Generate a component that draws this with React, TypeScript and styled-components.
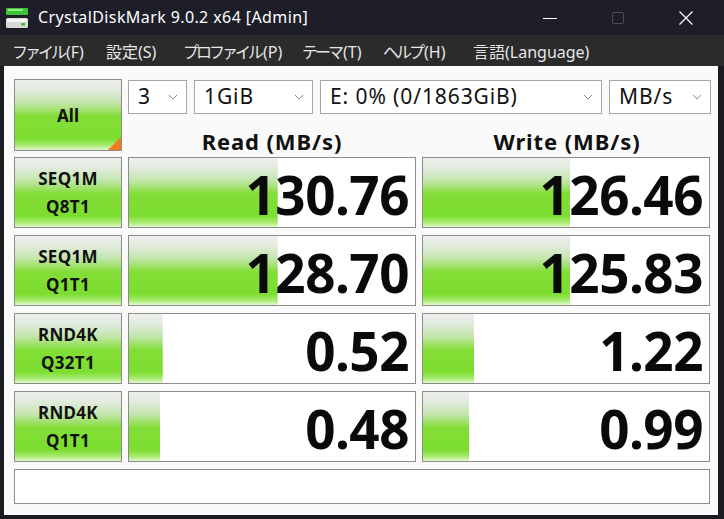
import React from "react";
import styled, { createGlobalStyle } from "styled-components";

const GlobalStyle = createGlobalStyle`
  html, body { margin: 0; padding: 0; background: #1b1b22; }
  body { font-family: "Noto Sans", "Noto Sans CJK JP", "Open Sans", sans-serif; }
`;

const Window = styled.div`
  width: 724px;
  height: 519px;
  display: flex;
  flex-direction: column;
  background: #1b1b22;
  overflow: hidden;
`;

const TitleBar = styled.div`
  height: 35px;
  background: #1e1e29;
  display: flex;
  align-items: center;
  color: #fff;
  font-size: 16px;
  padding-right: 4px;
`;

const AppIcon = styled.svg`
  width: 24px;
  height: 22px;
  margin: 0 9px 0 5px;
`;

const Title = styled.div`
  flex: 1;
  white-space: nowrap;
  margin-top: -1px;
  letter-spacing: 0.4px;
`;

const WinButton = styled.div<{ $dim?: boolean }>`
  width: 68px;
  height: 35px;
  display: flex;
  align-items: center;
  justify-content: center;
  color: ${p => (p.$dim ? "#4a4a55" : "#fff")};
`;

const MenuBar = styled.div`
  height: 31px;
  background: #2b2b2b;
  display: flex;
  align-items: center;
  padding-left: 12px;
  color: #e6e6e6;
  font-size: 16px;
`;

const MenuItem = styled.span<{ $w: number }>`
  width: ${p => p.$w}px;
  white-space: nowrap;
`;

// katakana in the Windows UI font are narrower than full width
const Kana = styled.span`
  letter-spacing: -3px;
  margin-right: 2px;
`;

const Content = styled.div`
  flex: 1;
  background: #fafafa;
  margin: 0 6px 4px 4px;
  padding: 13px 8px 0 10px;
  display: flex;
  flex-direction: column;
`;

const TopArea = styled.div`
  display: grid;
  grid-template-columns: 108px 1fr;
  column-gap: 6px;
`;

const green = `linear-gradient(to bottom, #eef0ee 0%, #e2ebde 14%, #c4e6ae 32%, #98e05c 46%, #82de36 52%, #7ddd30 84%, #a6ea6e 93%, #e0f8cc 100%)`;

const AllButton = styled.div`
  position: relative;
  height: 72px;
  box-sizing: border-box;
  border: 1px solid #8c8c8c;
  background: ${green};
  display: flex;
  align-items: center;
  justify-content: center;
  font-weight: 700;
  font-size: 17px;
  color: #111;
  overflow: hidden;
  &::after {
    content: "";
    position: absolute;
    right: 0;
    bottom: 0;
    border-style: solid;
    border-width: 0 0 13px 13px;
    border-color: transparent transparent #f07a1c transparent;
  }
`;

const RightTop = styled.div`
  display: flex;
  flex-direction: column;
`;

const ComboRow = styled.div`
  display: flex;
  gap: 7px;
  margin-top: 1px;
`;

const Combo = styled.div<{ $w: number }>`
  width: ${p => p.$w}px;
  height: 34px;
  box-sizing: border-box;
  border: 1px solid #a6a6a6;
  background: #fff;
  display: flex;
  align-items: center;
  padding: 0 8px 0 9px;
  font-size: 21px;
  letter-spacing: 0.9px;
  color: #111;
  white-space: nowrap;
`;

const ComboText = styled.span`
  flex: 1;
  margin-top: -2px;
`;

const Chevron = styled.svg`
  width: 10px;
  height: 6px;
  flex: none;
`;

const HeaderRow = styled.div`
  display: grid;
  grid-template-columns: 1fr 1fr;
  column-gap: 7px;
  height: 37px;
  align-items: end;
`;

const Header = styled.div`
  text-align: center;
  font-weight: 700;
  font-size: 22px;
  letter-spacing: 0.9px;
  color: #111;
  line-height: 28px;
  margin-bottom: -4px;
`;

const Rows = styled.div`
  display: grid;
  grid-template-columns: 108px 1fr 1fr;
  grid-auto-rows: 71px;
  column-gap: 6px;
  row-gap: 7px;
  margin-top: 6px;
`;

const TestButton = styled.div`
  box-sizing: border-box;
  border: 1px solid #8c8c8c;
  background: ${green};
  display: flex;
  flex-direction: column;
  align-items: center;
  justify-content: center;
  font-weight: 700;
  font-size: 17px;
  letter-spacing: 0.3px;
  line-height: 28px;
  color: #111;
`;

const Cell = styled.div`
  box-sizing: border-box;
  border: 1px solid #8c8c8c;
  background-color: #fff;
  background-image: ${green};
  background-repeat: no-repeat;
  display: flex;
  align-items: center;
  justify-content: flex-end;
  padding: 3px 6px 0 0;
  font-weight: 700;
  font-size: 53px;
  letter-spacing: -0.5px;
  color: #0a0a0a;
`;

const StatusBar = styled.div`
  margin-top: 7px;
  height: 35px;
  box-sizing: border-box;
  border: 1px solid #8c8c8c;
  background: #fff;
`;

const rows = [
  { a: "SEQ1M", b: "Q8T1", read: "130.76", rp: 52, write: "126.46", wp: 51.4 },
  { a: "SEQ1M", b: "Q1T1", read: "128.70", rp: 52, write: "125.83", wp: 51.4 },
  { a: "RND4K", b: "Q32T1", read: "0.52", rp: 11.8, write: "1.22", wp: 18 },
  { a: "RND4K", b: "Q1T1", read: "0.48", rp: 11, write: "0.99", wp: 16.2 },
];

function ChevronIcon() {
  return (
    <Chevron viewBox="0 0 10 6">
      <path d="M1 1 L5 5 L9 1" fill="none" stroke="#888" strokeWidth="1" />
    </Chevron>
  );
}

export default function App() {
  return (
    <Window>
      <GlobalStyle />
      <TitleBar>
        <AppIcon viewBox="0 0 24 22">
          <rect x="1" y="1" width="22" height="7" rx="1" fill="#3fc23a" />
          <rect x="3" y="2" width="15" height="2" fill="#8ef07a" />
          <rect x="1" y="11" width="22" height="10" rx="1.5" fill="#d8d8d8" />
          <rect x="2" y="12" width="20" height="3" fill="#f4f4f4" />
          <rect x="16" y="16" width="4" height="2.5" fill="#3fc23a" />
        </AppIcon>
        <Title>CrystalDiskMark 9.0.2 x64 [Admin]</Title>
        <WinButton>
          <svg width="16" height="16" viewBox="0 0 16 16">
            <path d="M1 8.5 H15" stroke="#fff" strokeWidth="1" />
          </svg>
        </WinButton>
        <WinButton $dim>
          <svg width="14" height="14" viewBox="0 0 14 14">
            <rect x="1.5" y="1.5" width="11" height="11" rx="1" fill="none" stroke="#4d4d58" strokeWidth="1" />
          </svg>
        </WinButton>
        <WinButton>
          <svg width="16" height="16" viewBox="0 0 16 16">
            <path d="M1.5 1.5 L14.5 14.5 M14.5 1.5 L1.5 14.5" stroke="#fff" strokeWidth="1.2" />
          </svg>
        </WinButton>
      </TitleBar>
      <MenuBar>
        <MenuItem $w={94}><Kana>ファイル</Kana>(F)</MenuItem>
        <MenuItem $w={77}>設定(S)</MenuItem>
        <MenuItem $w={119}><Kana>プロファイル</Kana>(P)</MenuItem>
        <MenuItem $w={81}><Kana>テーマ</Kana>(T)</MenuItem>
        <MenuItem $w={90}><Kana>ヘルプ</Kana>(H)</MenuItem>
        <MenuItem $w={140}>言語(Language)</MenuItem>
      </MenuBar>
      <Content>
        <TopArea>
          <AllButton>All</AllButton>
          <RightTop>
            <ComboRow>
              <Combo $w={59}>
                <ComboText>3</ComboText>
                <ChevronIcon />
              </Combo>
              <Combo $w={119}>
                <ComboText>1GiB</ComboText>
                <ChevronIcon />
              </Combo>
              <Combo $w={282}>
                <ComboText>E: 0% (0/1863GiB)</ComboText>
                <ChevronIcon />
              </Combo>
              <Combo $w={102}>
                <ComboText>MB/s</ComboText>
                <ChevronIcon />
              </Combo>
            </ComboRow>
            <HeaderRow>
              <Header>Read (MB/s)</Header>
              <Header>Write (MB/s)</Header>
            </HeaderRow>
          </RightTop>
        </TopArea>
        <Rows>
          {rows.map(r => (
            <React.Fragment key={r.a + r.b}>
              <TestButton>
                <span>{r.a}</span>
                <span>{r.b}</span>
              </TestButton>
              <Cell style={{ backgroundSize: `${r.rp}% 100%` }}>{r.read}</Cell>
              <Cell style={{ backgroundSize: `${r.wp}% 100%` }}>{r.write}</Cell>
            </React.Fragment>
          ))}
        </Rows>
        <StatusBar />
      </Content>
    </Window>
  );
}
